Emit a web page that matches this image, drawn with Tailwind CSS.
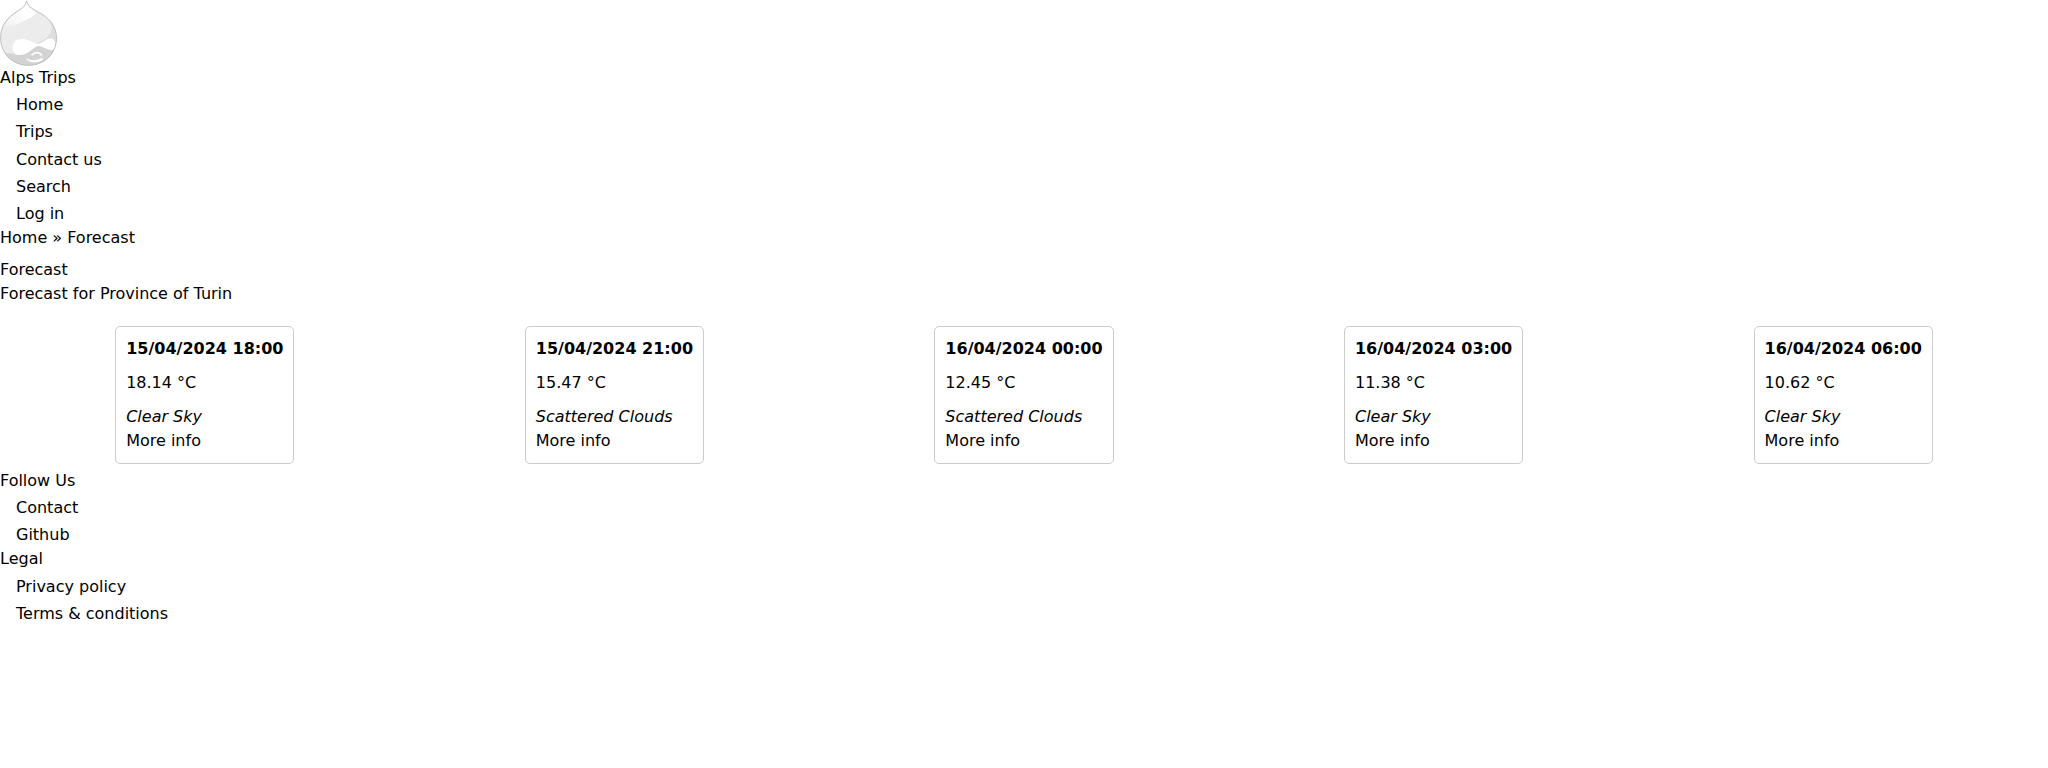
<!DOCTYPE html>
<html lang="en">
<head>
<meta charset="utf-8">
<title>Forecast | Alps Trips</title>
<script src="https://cdn.jsdelivr.net/npm/@tailwindcss/browser@4"></script>
</head>
<body class="bg-white text-black text-base leading-6 font-['DejaVu_Sans',sans-serif]">
<header>
  <a href="#" class="block h-[66px]" aria-label="Home">
    <svg class="block" width="58" height="66" viewBox="0 0 58 66">
      <defs>
        <linearGradient id="shine" x1="0" y1="1" x2="1" y2="0"><stop offset="0" stop-color="#f1f1f1"/><stop offset=".6" stop-color="#fff"/></linearGradient>
        <clipPath id="drop"><path d="M26.500 .8C28 6 31 8 37 11.500C49 17 56.500 26 56.500 38C56.500 54 44 65.300 28.500 65.300C12 65.300 .6 53 .6 38C.6 25 8 17 17 11.500C22 8.500 25.500 6 26.500 .8Z"/></clipPath>
      </defs>
      <g clip-path="url(#drop)">
        <path fill="#ececec" d="M0 0H58V66H0Z"/>
        <path fill="#dedede" d="M47 16C54 25 53 35 43 40C34 45 24 53 13 53H1V66H58V15Z"/>
        <path fill="#d3d3d3" d="M1 52.500C6 53.300 10 54 15 55C24 55 32 47 39 46C45 48 52 52 57 48V66H1Z"/>
        <path fill="url(#shine)" d="M26 1C28 8 32 9 36 12C35 16 30 18 26 20C17 25 10 27 4.500 26C7 16 23 12 26 1Z"/>
      </g>
      <path fill="#fff" d="M12.500 47.500C12.500 42 17 39 22.500 39C28.500 39 34 43.500 38 44C42 43.500 46 38.500 50.500 38.500C54.500 38.500 56 42 55.500 45.500C55 49 53 50.500 50.500 50C46 49 42 46 39 46C34 46 29 54.500 20.500 55C15 55.500 12.500 52 12.500 47.500Z"/>
      <path fill="none" stroke="#fff" stroke-width="1.800" stroke-linecap="round" d="M32 54.800C34.500 51.800 39.500 51.800 41.500 55"/>
      <path fill="#fff" d="M26 58.300C31 61 37 61 42.300 57.800C43.500 59 43 60.500 40 61.500C34 63.300 27.500 62 26 58.300Z"/>
      <path fill="none" stroke="#b9b9b9" stroke-width=".9" d="M26.500 .8C28 6 31 8 37 11.500C49 17 56.500 26 56.500 38C56.500 54 44 65.300 28.500 65.300C12 65.300 .6 53 .6 38C.6 25 8 17 17 11.500C22 8.500 25.500 6 26.500 .8Z"/>
    </svg>
  </a>
  <div><a href="#">Alps Trips</a></div>
  <nav>
    <ul class="pl-4">
      <li class="pt-[3.2px]"><a href="#">Home</a></li>
      <li class="pt-[3.2px]"><a href="#">Trips</a></li>
      <li class="pt-[3.2px]"><a href="#">Contact us</a></li>
      <li class="pt-[3.2px]"><a href="#">Search</a></li>
      <li class="pt-[3.2px]"><a href="#">Log in</a></li>
    </ul>
  </nav>
</header>
<nav class="mb-2"><a href="#">Home</a> » <a href="#">Forecast</a></nav>
<main>
  <h1>Forecast</h1>
  <h2>Forecast for Province of Turin</h2>
  <div class="mt-5 mb-[5px] grid grid-cols-5 justify-items-center">
    <article class="rounded-[5px] border border-[#ccc] p-2.5">
      <p class="mb-2.5 font-bold">15/04/2024 18:00</p>
      <p class="mb-2.5">18.14 °C</p>
      <p class="italic">Clear Sky</p>
      <a href="#" class="block">More info</a>
    </article>
    <article class="rounded-[5px] border border-[#ccc] p-2.5">
      <p class="mb-2.5 font-bold">15/04/2024 21:00</p>
      <p class="mb-2.5">15.47 °C</p>
      <p class="italic">Scattered Clouds</p>
      <a href="#" class="block">More info</a>
    </article>
    <article class="rounded-[5px] border border-[#ccc] p-2.5">
      <p class="mb-2.5 font-bold">16/04/2024 00:00</p>
      <p class="mb-2.5">12.45 °C</p>
      <p class="italic">Scattered Clouds</p>
      <a href="#" class="block">More info</a>
    </article>
    <article class="rounded-[5px] border border-[#ccc] p-2.5">
      <p class="mb-2.5 font-bold">16/04/2024 03:00</p>
      <p class="mb-2.5">11.38 °C</p>
      <p class="italic">Clear Sky</p>
      <a href="#" class="block">More info</a>
    </article>
    <article class="rounded-[5px] border border-[#ccc] p-2.5">
      <p class="mb-2.5 font-bold">16/04/2024 06:00</p>
      <p class="mb-2.5">10.62 °C</p>
      <p class="italic">Clear Sky</p>
      <a href="#" class="block">More info</a>
    </article>
  </div>
</main>
<footer>
  <h2>Follow Us</h2>
  <ul class="pl-4">
    <li class="pt-[3.2px]"><a href="#">Contact</a></li>
    <li class="pt-[3.2px]"><a href="#">Github</a></li>
  </ul>
  <h2>Legal</h2>
  <ul class="pl-4">
    <li class="pt-[3.2px]"><a href="#">Privacy policy</a></li>
    <li class="pt-[3.2px]"><a href="#">Terms &amp; conditions</a></li>
  </ul>
</footer>
</body>
</html>
